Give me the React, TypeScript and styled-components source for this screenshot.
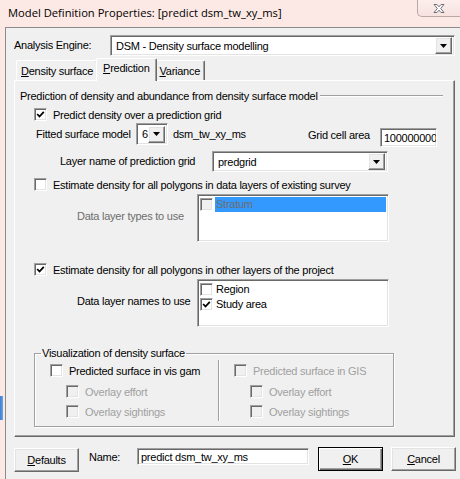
import React from 'react';
import styled, { createGlobalStyle, css } from 'styled-components';

const GlobalStyle = createGlobalStyle`
  html, body { margin: 0; padding: 0; }
  body {
    width: 460px; height: 479px; overflow: hidden;
    font-family: "Liberation Sans", Arial, sans-serif; font-size: 11px; color: #000;
    letter-spacing: -0.25px;
  }
  #root { width: 460px; height: 479px; }
  * { box-sizing: border-box; }
`;

const sunken = css`
  border: 1px solid;
  border-color: #a0a0a0 #ffffff #ffffff #a0a0a0;
  box-shadow: inset 1px 1px 0 #696969, inset -1px -1px 0 #e3e3e3;
`;
const raised = css`
  border: 1px solid;
  border-color: #ffffff #696969 #696969 #ffffff;
  box-shadow: inset -1px -1px 0 #a0a0a0, inset 1px 1px 0 #e3e3e3;
`;

const Window = styled.div`
  width: 460px;
  height: 479px;
  display: flex;
  flex-direction: column;
  background:
    linear-gradient(90deg, #3b7fd8, #6aa3e6) 0 396px / 3px 24px no-repeat,
    #fce8e4;
`;

const TitleBar = styled.div`
  height: 27px;
  flex: none;
  display: flex;
  justify-content: space-between;
  align-items: flex-start;
`;

const Title = styled.div`
  font-family: "Open Sans", "Liberation Sans", sans-serif;
  font-size: 11.2px;
  letter-spacing: 0;
  line-height: 16px;
  padding: 5px 0 0 8px;
  color: #000;
  white-space: nowrap;
`;

const CloseBtn = styled.div`
  width: 43px;
  height: 17px;
  border: 1px solid #b8a9a7;
  border-top: none;
  border-right: none;
  border-bottom-left-radius: 5px;
  background: linear-gradient(#fcefed, #f6e2df);
  display: flex;
  align-items: center;
  justify-content: center;
`;

const Client = styled.div`
  flex: 1;
  margin-left: 5px;
  background: #f0f0f0;
  border-left: 1px solid #8c8c8c;
  border-top: 1px solid #8c8c8c;
  display: flex;
  flex-direction: column;
  padding: 7px 5px 0 8px;
`;

const EngineRow = styled.div`
  display: flex;
  align-items: center;
  height: 21px;
`;

const Label = styled.div<{ $w?: number; $ml?: number; $mt?: number; $gray?: boolean }>`
  ${(p) => (p.$w ? `width: ${p.$w}px; flex: none;` : '')}
  margin-left: ${(p) => p.$ml ?? 0}px;
  margin-top: ${(p) => p.$mt ?? 0}px;
  color: ${(p) => (p.$gray ? '#6d6d6d' : '#000')};
  white-space: nowrap;
  line-height: 13px;
`;

const Combo = styled.div<{ $w?: number; $h?: number; $ml?: number }>`
  ${sunken};
  background: #fff;
  height: ${(p) => p.$h ?? 21}px;
  ${(p) => (p.$w ? `width: ${p.$w}px; flex: none;` : 'flex: 1;')}
  margin-left: ${(p) => p.$ml ?? 0}px;
  display: flex;
  align-items: center;
  padding: 2px;
`;

const ComboText = styled.div`
  flex: 1;
  padding-left: 3px;
  white-space: nowrap;
  overflow: hidden;
`;

const DropBtn = styled.div`
  ${raised};
  width: 17px;
  height: 17px;
  flex: none;
  background: #f0f0f0;
  display: flex;
  align-items: center;
  justify-content: center;
`;

const TabStrip = styled.div`
  display: flex;
  align-items: flex-end;
  height: 22px;
  margin-top: 2px;
  padding-left: 2px;
`;

const Tab = styled.div<{ $active?: boolean }>`
  position: relative;
  height: ${(p) => (p.$active ? 23 : 20)}px;
  margin: ${(p) => (p.$active ? '0 -2px -1px' : '0')};
  z-index: ${(p) => (p.$active ? 1 : 0)};
  padding: ${(p) => (p.$active ? '3px 6px 0' : '4px 4px 0')};
  background: #f0f0f0;
  border-top: 1px solid #fff;
  border-left: 1px solid #fff;
  border-right: 1px solid #696969;
  box-shadow: inset -1px 0 0 #a0a0a0;
  border-radius: 2px 2px 0 0;
  white-space: nowrap;
  line-height: 13px;
`;

const U = styled.span`
  text-decoration: underline;
  text-underline-offset: 1px;
`;

const Panel = styled.div`
  height: 357px;
  border: 1px solid;
  border-color: #fff #696969 #696969 #fff;
  box-shadow: inset -1px -1px 0 #a0a0a0;
  padding: 8px 11px 0 5px;
  display: flex;
  flex-direction: column;
`;

const GroupHeader = styled.div`
  display: flex;
  align-items: center;
  height: 13px;
  white-space: nowrap;
`;

const HeaderLine = styled.div`
  flex: 1;
  margin-left: 2px;
  border-top: 1px solid #a0a0a0;
  border-bottom: 1px solid #fff;
`;

const CheckRow = styled.div<{ $ml: number; $mt: number; $disabled?: boolean }>`
  display: flex;
  align-items: center;
  gap: 6px;
  margin-left: ${(p) => p.$ml}px;
  margin-top: ${(p) => p.$mt}px;
  height: 13px;
  white-space: nowrap;
  color: ${(p) => (p.$disabled ? '#a0a0a0' : '#000')};
`;

const Box = styled.span<{ $disabled?: boolean }>`
  ${sunken};
  width: 13px;
  height: 13px;
  flex: none;
  background: ${(p) => (p.$disabled ? '#f0f0f0' : '#fff')};
  display: flex;
  align-items: center;
  justify-content: center;
`;

const Row = styled.div<{ $mt: number; $ml?: number }>`
  display: flex;
  align-items: flex-start;
  margin-top: ${(p) => p.$mt}px;
  margin-left: ${(p) => p.$ml ?? 0}px;
`;

const TextInput = styled.div<{ $w: number; $h: number; $ml?: number; $mt?: number }>`
  ${sunken};
  background: #fff;
  width: ${(p) => p.$w}px;
  height: ${(p) => p.$h}px;
  flex: none;
  margin-left: ${(p) => p.$ml ?? 0}px;
  margin-top: ${(p) => p.$mt ?? 0}px;
  padding: 0 0 0 3px;
  display: flex;
  align-items: center;
  white-space: nowrap;
  overflow: hidden;
`;

const ListBox = styled.div`
  ${sunken};
  background: #fff;
  width: 192px;
  height: 48px;
  flex: none;
  padding: 2px;
  display: flex;
  flex-direction: column;
`;

const ListItem = styled.div`
  display: flex;
  align-items: center;
  height: 15px;
  white-space: nowrap;
`;

const ItemText = styled.span<{ $selected?: boolean; $dim?: boolean }>`
  flex: 1;
  height: 15px;
  line-height: 15px;
  margin-left: 2px;
  padding-left: 1px;
  background: ${(p) => (p.$selected ? '#3399ff' : 'transparent')};
  color: ${(p) => (p.$dim ? '#6d6d6d' : '#000')};
`;

const Fieldset = styled.fieldset`
  margin: 20px 0 0 14px;
  width: 360px;
  height: 80px;
  padding: 0 0 7px;
  border: 1px solid #a0a0a0;
  box-shadow: 1px 1px 0 #fff, inset 1px 1px 0 #fff;
  display: flex;
`;

const Legend = styled.legend`
  padding: 0 1px;
  margin-left: 6px;
  line-height: 13px;
`;

const Column = styled.div<{ $w: number }>`
  width: ${(p) => p.$w}px;
  flex: none;
  display: flex;
  flex-direction: column;
  padding-top: 4px;
`;

const VSep = styled.div`
  width: 2px;
  height: 61px;
  flex: none;
  border-left: 1px solid #a0a0a0;
  border-right: 1px solid #fff;
`;

const BottomBar = styled.div`
  display: flex;
  align-items: flex-start;
  margin-top: 10px;
`;

const Button = styled.div<{ $w: number; $default?: boolean; $ml?: number; $mt?: number }>`
  width: ${(p) => p.$w}px;
  height: 24px;
  flex: none;
  margin-left: ${(p) => p.$ml ?? 0}px;
  margin-top: ${(p) => p.$mt ?? 0}px;
  background: #f0f0f0;
  display: flex;
  align-items: center;
  justify-content: center;
  ${(p) =>
    p.$default
      ? css`
          border: 1px solid #000;
          box-shadow: inset 1px 1px 0 #fff, inset -1px -1px 0 #696969, inset -2px -2px 0 #a0a0a0;
        `
      : raised}
`;

const Arrow = () => (
  <svg width="7" height="4" viewBox="0 0 7 4">
    <polygon points="0,0 7,0 3.5,4" fill="#000" />
  </svg>
);

const Check = () => (
  <svg width="9" height="9" viewBox="0 0 9 9">
    <polyline points="1.2,4 3.5,6.5 7.8,1.8" fill="none" stroke="#000" strokeWidth="1.8" />
  </svg>
);

const CloseGlyph = () => (
  <svg width="14" height="11" viewBox="0 0 14 11">
    <path
      d="M2 1.5 L5 1.5 L7 3.8 L9 1.5 L12 1.5 L8.7 5.5 L12 9.5 L9 9.5 L7 7.2 L5 9.5 L2 9.5 L5.3 5.5 Z"
      fill="#fff"
      stroke="#6f6f7a"
      strokeWidth="1"
      strokeLinejoin="round"
    />
  </svg>
);

type CBProps = { label: React.ReactNode; checked?: boolean; disabled?: boolean; ml: number; mt: number };
const CheckBox = ({ label, checked, disabled, ml, mt }: CBProps) => (
  <CheckRow $ml={ml} $mt={mt} $disabled={disabled}>
    <Box $disabled={disabled}>{checked && <Check />}</Box>
    <span>{label}</span>
  </CheckRow>
);

export default function App() {
  return (
    <>
      <GlobalStyle />
      <Window>
        <TitleBar>
          <Title>Model Definition Properties: [predict dsm_tw_xy_ms]</Title>
          <CloseBtn>
            <CloseGlyph />
          </CloseBtn>
        </TitleBar>
        <Client>
          <EngineRow>
            <Label $w={96}>Analysis Engine:</Label>
            <Combo>
              <ComboText>DSM - Density surface modelling</ComboText>
              <DropBtn>
                <Arrow />
              </DropBtn>
            </Combo>
          </EngineRow>

          <TabStrip>
            <Tab>
              <U>D</U>ensity surface
            </Tab>
            <Tab $active>
              <U>P</U>rediction
            </Tab>
            <Tab>
              <U>V</U>ariance
            </Tab>
          </TabStrip>

          <Panel>
            <GroupHeader>
              Prediction of density and abundance from density surface model
              <HeaderLine />
            </GroupHeader>

            <CheckBox label="Predict density over a prediction grid" checked ml={14} mt={6} />

            <Row $mt={2} $ml={16}>
              <Label $w={100} $mt={5}>Fitted surface model</Label>
              <Combo $w={32} $h={22}>
                <ComboText>6</ComboText>
                <DropBtn>
                  <Arrow />
                </DropBtn>
              </Combo>
              <Label $w={135} $mt={5} $ml={5}>dsm_tw_xy_ms</Label>
              <Label $w={72} $mt={6}>Grid cell area</Label>
              <TextInput $w={57} $h={19} $mt={5}>100000000</TextInput>
            </Row>

            <Row $mt={4} $ml={40}>
              <Label $w={152} $mt={4}>Layer name of prediction grid</Label>
              <Combo $w={176}>
                <ComboText>predgrid</ComboText>
                <DropBtn>
                  <Arrow />
                </DropBtn>
              </Combo>
            </Row>

            <CheckBox label="Estimate density for all polygons in data layers of existing survey" ml={14} mt={6} />

            <Row $mt={3} $ml={57}>
              <Label $w={120} $mt={16} $gray>Data layer types to use</Label>
              <ListBox>
                <ListItem>
                  <Box $disabled />
                  <ItemText $selected $dim>Stratum</ItemText>
                </ListItem>
              </ListBox>
            </Row>

            <CheckBox label="Estimate density for all polygons in other layers of the project" checked ml={14} mt={21} />

            <Row $mt={3} $ml={57}>
              <Label $w={120} $mt={16}>Data layer names to use</Label>
              <ListBox>
                <ListItem>
                  <Box />
                  <ItemText>Region</ItemText>
                </ListItem>
                <ListItem>
                  <Box>
                    <Check />
                  </Box>
                  <ItemText>Study area</ItemText>
                </ListItem>
              </ListBox>
            </Row>

            <Fieldset>
              <Legend>Visualization of density surface</Legend>
              <Column $w={183}>
                <CheckBox label="Predicted surface in vis gam" ml={15} mt={0} />
                <CheckBox label="Overlay effort" disabled ml={31} mt={8} />
                <CheckBox label="Overlay sightings" disabled ml={31} mt={7} />
              </Column>
              <VSep />
              <Column $w={170}>
                <CheckBox label="Predicted surface in GIS" disabled ml={14} mt={0} />
                <CheckBox label="Overlay effort" disabled ml={30} mt={8} />
                <CheckBox label="Overlay sightings" disabled ml={30} mt={7} />
              </Column>
            </Fieldset>
          </Panel>

          <BottomBar>
            <Button $w={65} $mt={1}>
              <span>
                <U>D</U>efaults
              </span>
            </Button>
            <Label $w={48} $ml={10} $mt={4}>Name:</Label>
            <TextInput $w={172} $h={17} $mt={1}>predict dsm_tw_xy_ms</TextInput>
            <Button $w={65} $ml={9} $default>
              <span>
                <U>O</U>K
              </span>
            </Button>
            <Button $w={65} $ml={8}>
              <span>
                <U>C</U>ancel
              </span>
            </Button>
          </BottomBar>
        </Client>
      </Window>
    </>
  );
}
